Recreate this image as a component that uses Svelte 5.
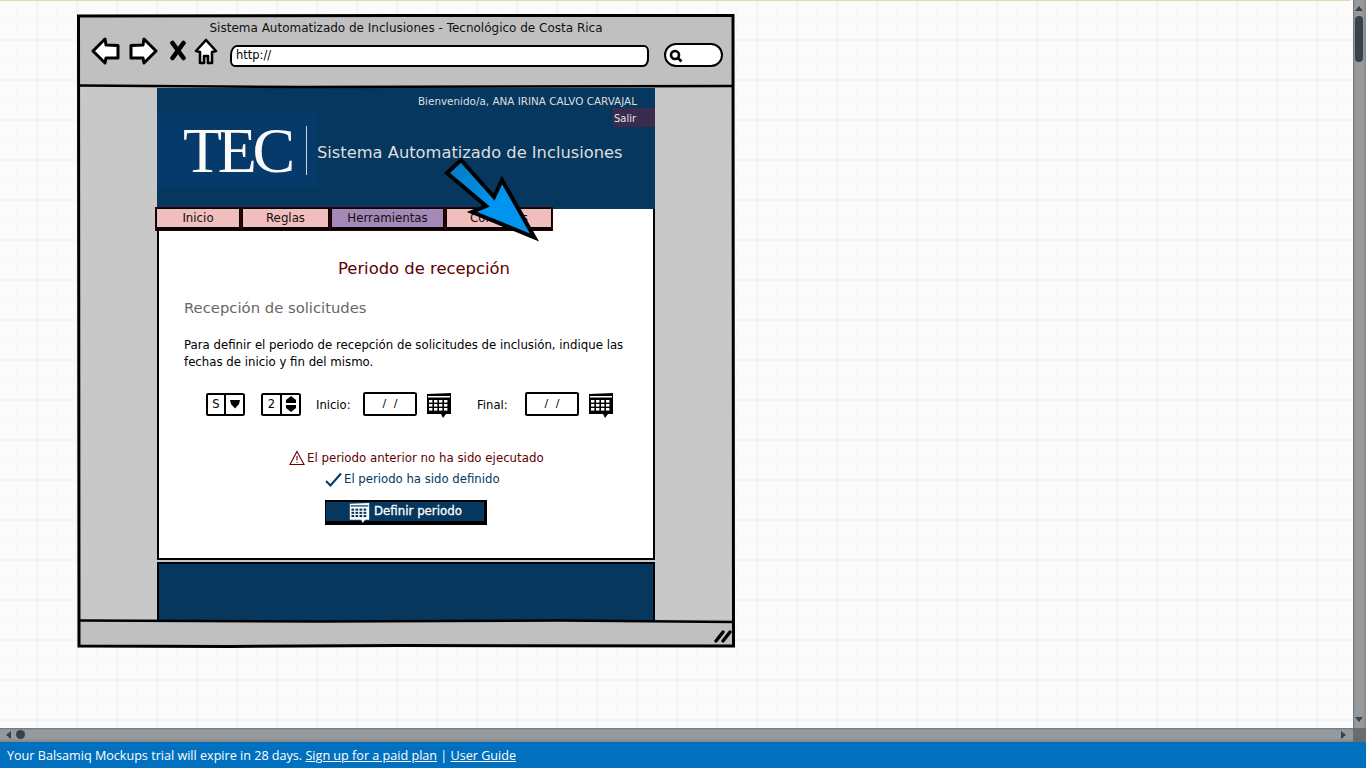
<script>
  const tabs = [
    { label: 'Inicio', w: 86 },
    { label: 'Reglas', w: 89 },
    { label: 'Herramientas', w: 115 },
    { label: 'Consultas', w: 108 }
  ].map((t) => ({ ...t, on: t.label === 'Herramientas' }));
</script>

{#snippet cal(ink, paper)}
  <svg class="cal" width="26" height="27" viewBox="0 0 26 27" aria-hidden="true">
    <path d="M1 2 L25 1 L25 22 L20 22 L17 26 L15 22 L1 22 Z" fill={ink} />
    <rect x="2" y="4" width="22" height="1.5" fill={paper} />
    {#each [8, 12, 16] as y}
      {#each [3, 8, 13, 18] as x}
        <rect x={x} y={y} width="3.4" height="2.6" fill={paper} />
      {/each}
    {/each}
  </svg>
{/snippet}

<div class="app">
  <div class="left">
    <main class="canvas">
      <section class="browser">
        <header class="chrome">
          <div class="title">Sistema Automatizado de Inclusiones - Tecnológico de Costa Rica</div>
          <div class="tools">
            <svg class="icon back" width="29" height="28" viewBox="0 0 29 28"><path d="M2 14 L14 2 L15 8 L27 8.5 L27 21 L15 21 L14 26 Z" fill="#fff" stroke="#000" stroke-width="3" stroke-linejoin="round"/></svg>
            <svg class="icon fwd" width="29" height="28" viewBox="0 0 29 28"><path d="M27 14 L15 2 L14 8 L2 8.5 L2 21 L14 21 L15 26 Z" fill="#fff" stroke="#000" stroke-width="3" stroke-linejoin="round"/></svg>
            <svg class="icon stop" width="18" height="21" viewBox="0 0 18 21"><path d="M3.5 3 L14.5 18 M14.5 3 L3.5 18" fill="none" stroke="#000" stroke-width="4.6" stroke-linecap="round"/></svg>
            <svg class="icon home" width="24" height="27" viewBox="0 0 24 27"><path d="M12 2 L22 13 L18 14 L18 25 L14 25 L14 18 L10 18 L10 25 L6 25 L6 14 L2 13 Z" fill="#fff" stroke="#000" stroke-width="2.6" stroke-linejoin="round"/></svg>
            <div class="url">http://</div>
            <div class="search">
              <svg width="14" height="14" viewBox="0 0 14 14"><circle cx="6" cy="6" r="4" fill="none" stroke="#000" stroke-width="2.6"/><path d="M9 9 L12.5 12.5" stroke="#000" stroke-width="2.6"/></svg>
            </div>
          </div>
        </header>

        <div class="body">
          <div class="gutter"></div>
          <div class="page">
            <div class="masthead">
              <div class="welcome">Bienvenido/a, ANA IRINA CALVO CARVAJAL</div>
              <div class="salir"><span>Salir</span></div>
              <div class="brand">
                <div class="logo"><span class="tec">TEC</span><i></i></div>
                <div class="sys">Sistema Automatizado de Inclusiones</div>
              </div>
            </div>

            <nav class="tabs">
              {#each tabs as t}
                <div class="tab" class:on={t.on} style="width:{t.w}px">{t.label}</div>
              {/each}
            </nav>

            <div class="panel">
              <h1>Periodo de recepción</h1>
              <h2>Recepción de solicitudes</h2>
              <p>Para definir el periodo de recepción de solicitudes de inclusión, indique las<br />fechas de inicio y fin del mismo.</p>

              <div class="controls">
                <div class="box sel">
                  <span>S</span>
                  <b><svg width="12" height="10" viewBox="0 0 12 10"><path d="M1 1 L11 1 L10 5 L6 9.5 L2 5 Z" fill="#000"/></svg></b>
                </div>
                <div class="box num">
                  <span>2</span>
                  <b><svg width="12" height="18" viewBox="0 0 12 18"><path d="M6 1 L11 5 L11 8 L1 8 L1 5 Z M1 10 L11 10 L11 13 L6 17 L1 13 Z" fill="#000"/></svg></b>
                </div>
                <label class="l1">Inicio:</label>
                <div class="box date">/ /</div>
                {@render cal('#000', '#fff')}
                <label class="l2">Final:</label>
                <div class="box date d2">/ /</div>
                {@render cal('#000', '#fff')}
              </div>

              <div class="msg warn">
                <svg width="16" height="16" viewBox="0 0 16 16"><path d="M8 1.5 L15 14.5 L1 14.5 Z M8 6 L8 10.5 M8 12 L8 13" fill="none" stroke="#6a0000" stroke-width="1.1"/></svg>
                El periodo anterior no ha sido ejecutado
              </div>
              <div class="msg ok">
                <svg width="17" height="15" viewBox="0 0 17 15"><path d="M1 9 L5.5 13.5 L16 1.5" fill="none" stroke="#05375f" stroke-width="2"/></svg>
                El periodo ha sido definido
              </div>
              <button class="define">
                {@render cal('#fff', '#05375f')}
                <span>Definir periodo</span>
              </button>
            </div>

            <div class="foot"></div>
          </div>
          <div class="gutter"></div>
        </div>

        <footer class="status">
          <svg width="18" height="14" viewBox="0 0 18 14"><path d="M2 12 L9 3 M9 12 L16 3" stroke="#000" stroke-width="3.4" stroke-linecap="round"/></svg>
        </footer>
      </section>

      <svg class="ink" width="1353" height="728" viewBox="0 0 1353 728" aria-hidden="true">
        <path d="M78.5 16 L400 15.5 L733 15.5 L733.5 646 L400 645.5 L230 646.5 L79 646 Z" fill="none" stroke="#000" stroke-width="3"/>
        <path d="M79 85.5 L300 87 L733 86" fill="none" stroke="#000" stroke-width="2.6"/>
        <path d="M79 620.5 L320 621.5 L560 620.5 L733 622" fill="none" stroke="#000" stroke-width="2.6"/>
        <defs>
          <linearGradient id="ar" x1="0" y1="0" x2="1" y2="1">
            <stop offset="0" stop-color="#0578bd"/>
            <stop offset="0.55" stop-color="#0094ee"/>
          </linearGradient>
        </defs>
        <path d="M447 173 L461 160 L494 197 L502 180 L534.5 237.5 L472 212 L486 206 Z" fill="url(#ar)" stroke="#000" stroke-width="4" stroke-linejoin="miter"/>
      </svg>
    </main>

    <div class="hbar">
      <span class="la"></span><span class="ht"></span><span class="ra"></span>
    </div>
  </div>

  <aside class="vbar">
    <span class="ua"></span><span class="vt"></span><span class="sp"></span><span class="da"></span>
  </aside>

  <div class="trial">
    Your Balsamiq Mockups trial will expire in 28 days. <u>Sign up for a paid plan</u> | <u>User Guide</u>
  </div>
</div>

<style>
  :global(html), :global(body) { margin: 0; overflow: hidden; }
  .app {
    width: 1366px; height: 768px;
    display: grid;
    grid-template-columns: 1353px 13px;
    grid-template-rows: 742px 26px;
    font-family: "DejaVu Sans", sans-serif;
    color: #000;
  }
  .left { display: flex; flex-direction: column; min-height: 0; }
  .canvas {
    position: relative;
    height: 728px;
    padding: 15px 0 0 78px;
    box-sizing: border-box;
    overflow: hidden;
    background:
      linear-gradient(#e2dba6, #e2dba6) 0 0 / 1350px 1px no-repeat,
      linear-gradient(90deg, #f3f3f3 2px, transparent 2px) 36px 0 / 40px 40px,
      linear-gradient(#f3f3f3 2px, transparent 2px) 0 39px / 40px 40px,
      linear-gradient(90deg, #f7f7f7 1px, transparent 1px) 16px 0 / 40px 40px,
      linear-gradient(#f7f7f7 1px, transparent 1px) 0 19px / 40px 40px,
      #fbfbfb;
  }
  .ink { position: absolute; left: 0; top: 0; z-index: 5; pointer-events: none; }

  .browser {
    width: 656px; height: 632px;
    display: flex; flex-direction: column;
    background: #c0c0c0;
  }
  .chrome { height: 72px; box-sizing: border-box; padding-top: 5px; flex: none; }
  .title { font-size: 12px; text-align: center; line-height: 16px; color: #111; }
  .tools { display: flex; align-items: center; height: 30px; margin-top: 2px; padding-left: 13px; }
  .icon { flex: none; display: block; }
  .back, .fwd { margin-top: -4px; }
  .fwd { margin-left: 9px; }
  .stop { margin-left: 11px; margin-top: -6px; }
  .home { margin-left: 7px; margin-top: -4px; }
  .url {
    margin-left: 12px; width: 419px; height: 22px;
    box-sizing: border-box;
    background: #fff;
    border: 2.5px solid #000;
    border-radius: 7px 5px 6px 5px / 10px 6px 8px 6px;
    font-size: 11.5px; line-height: 16px; padding-left: 4px;
    margin-top: 6px;
  }
  .search {
    margin-left: 15px; width: 59px; height: 24px; box-sizing: border-box;
    background: #fff; border: 2.5px solid #000; border-radius: 12px;
    padding: 4px 0 0 3px; margin-top: 4px;
  }
  .search svg { display: block; }

  .body { flex: 1; display: flex; min-height: 0; background: #c8c8c8; }
  .gutter { width: 79px; flex: none; }
  .page { width: 498px; flex: none; position: relative; }

  .masthead { height: 121px; background: #05375f; margin-top: 1px; }
  .welcome { color: #dedede; font-size: 10.4px; text-align: right; padding: 7px 18px 0 0; line-height: 12px; }
  .salir {
    width: 42px; height: 19px; margin-left: auto; margin-top: 1px; margin-bottom: -14px;
    background: #3b2b4f; color: #e6e6e6; font-size: 10px; line-height: 21px; position: relative;
  }
  .salir span { padding-left: 1px; }
  .brand { display: flex; align-items: center; }
  .logo { width: 160px; height: 74px; background: #053a6b; position: relative; flex: none; }
  .tec {
    position: absolute; left: 26px; top: 1px;
    font-family: "Liberation Serif", serif; font-size: 64px; line-height: 74px; color: #fafafa; letter-spacing: -4.3px;
  }
  .logo i { position: absolute; left: 149px; top: 13px; width: 1px; height: 49px; background: #c8d4de; }
  .sys { color: #dedede; font-size: 16.3px; margin-top: 4px; white-space: nowrap; }

  .tabs { display: flex; height: 24px; margin: -2px 0 -22px -2px; position: relative; z-index: 2; }
  .tab {
    box-sizing: border-box; height: 24px; flex: none;
    background: #f2bdbd;
    border: 2px solid #000;
    outline: 1px solid rgba(110, 0, 0, .45);
    outline-offset: -1px;
    border-bottom-width: 4px;
    text-align: center; font-size: 11.8px; line-height: 19px; color: #111;
  }
  .tab.on { background: #a488b8; }

  .panel {
    height: 351px; width: 498px; box-sizing: border-box; background: #fff;
    border: 2px solid #000; border-top: 0;
    padding: 49px 0 0 25px;
  }
  h1 { margin: 0 0 0 154px; font: 400 16.4px/22px "DejaVu Sans", sans-serif; color: #5f0000; white-space: nowrap; }
  h2 { margin: 18px 0 0 0; font: 400 14.8px/20px "DejaVu Sans", sans-serif; color: #666; }
  p { margin: 19px 0 0 0; font-size: 11.75px; line-height: 17px; white-space: nowrap; }

  .controls { display: flex; align-items: center; height: 26px; margin: 20px 0 0 22px; font-size: 11.6px; }
  .box {
    box-sizing: border-box; border: 2px solid #000; background: #fff; flex: none;
    border-radius: 2px 3px 2px 3px / 3px 2px 3px 2px;
  }
  .sel, .num { display: flex; height: 23px; font-size: 11.5px; line-height: 18px; }
  .sel { width: 39px; }
  .num { width: 40px; margin-left: 16px; }
  .sel span, .num span { flex: 1; text-align: center; }
  .sel b, .num b { display: flex; align-items: center; justify-content: center; width: 17px; border-left: 2px solid #000; }
  .l1 { margin: 1px 0 0 15px; width: 47px; }
  .l2 { margin: 1px 0 0 25px; width: 48px; }
  .date { width: 54px; height: 24px; text-align: center; line-height: 19px; font-size: 11px; word-spacing: 4px; border-width: 2.5px; }
  .cal { display: block; flex: none; }
  .controls .cal { margin-left: 9px; margin-top: 3px; }

  .msg { display: flex; align-items: center; gap: 2px; font-size: 11.8px; line-height: 20px; white-space: nowrap; }
  .msg svg { flex: none; }
  .warn { color: #5f0000; margin: 31px 0 0 105px; }
  .ok { color: #05375f; margin: 1px 0 0 141px; font-size: 11.7px; }
  .define {
    display: flex; align-items: center; margin: 11px 0 0 141px; padding: 0 0 0 23px;
    width: 162px; height: 25px; box-sizing: border-box;
    background: #05375f; color: #fff;
    border: 2px solid #000; border-width: 2px 3px 4px 1px;
    font: 400 11.8px/1 "DejaVu Sans", sans-serif;
    -webkit-text-stroke: 0.3px #fff;
    gap: 4px;
  }
  .define span { padding-top: 1px; }
  .define .cal { width: 21px; height: 22px; margin-top: 2px; }

  .foot { height: 59px; margin-top: 2px; background: #05375f; border: 2px solid #000; border-bottom: 0; box-sizing: border-box; }

  .status {
    height: 26px; flex: none; box-sizing: border-box; margin-top: 2px;
    display: flex; justify-content: flex-end; align-items: center; padding: 4px 2px 0 0; background: #c0c0c0;
  }

  .hbar {
    height: 14px; box-sizing: border-box;
    background: linear-gradient(#6f7173 0, #979a9c 2px, #979a9c 10px, #84878a 14px);
    position: relative; flex: none;
  }
  .la, .ra, .ht { position: absolute; display: block; }
  .la { left: 6px; top: 3px; border: 4px solid transparent; border-left: 0; border-right: 5px solid #37424a; }
  .ht { left: 16px; top: 2px; width: 9px; height: 9px; border-radius: 50%; background: #37424a; }
  .ra { right: 7px; top: 3px; border: 4px solid transparent; border-right: 0; border-left: 5px solid #37424a; }

  .vbar {
    grid-column: 2; grid-row: 1;
    position: relative;
    background: linear-gradient(90deg, #6f7173 0, #979a9c 2px, #979a9c 10px, #84878a 13px);
  }
  .ua, .vt, .da, .sp { position: absolute; display: block; }
  .ua { left: 2px; top: 6px; border: 4px solid transparent; border-top: 0; border-bottom: 5px solid #37424a; }
  .vt { left: 2px; top: 16px; width: 8px; height: 46px; border-radius: 4px; background: #37424a; }
  .da { left: 2px; top: 717px; border: 4px solid transparent; border-bottom: 0; border-top: 5px solid #37424a; }
  .sp { left: 0; right: 0; bottom: 0; height: 14px; background: #6b6b6b; }

  .trial {
    grid-column: 1 / 3; grid-row: 2;
    background: #0070bf; color: #fff;
    font: 12.6px/28px "Open Sans", sans-serif;
    padding-left: 7px;
    white-space: nowrap;
  }
</style>
